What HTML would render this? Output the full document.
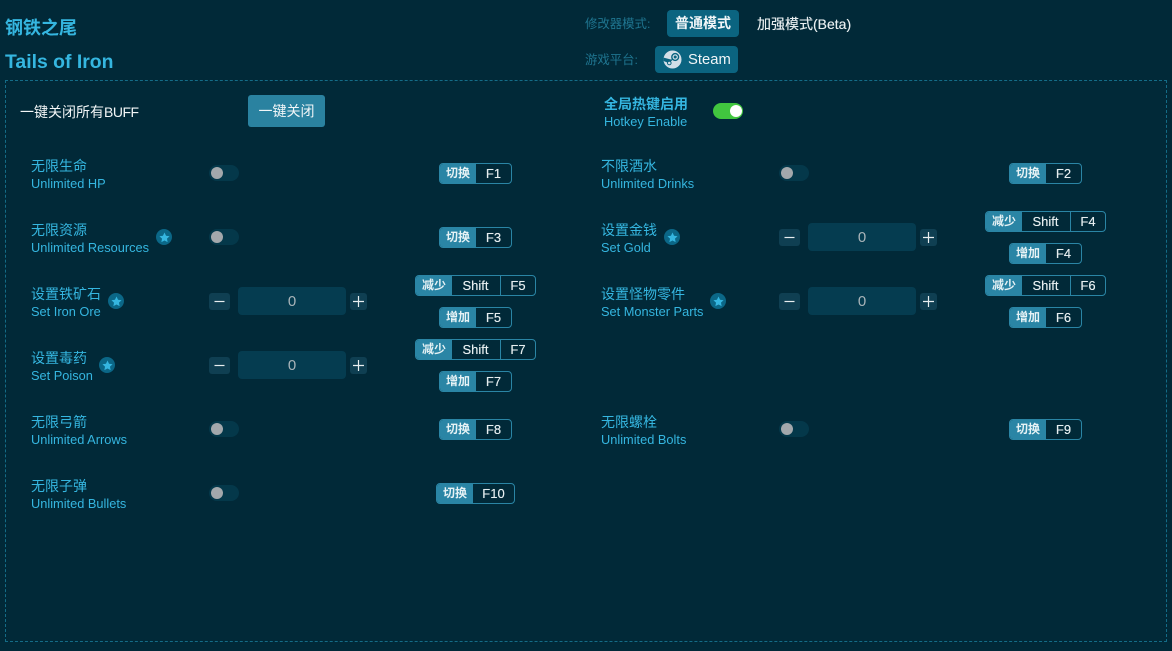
<!DOCTYPE html>
<html lang="zh">
<head>
<meta charset="utf-8">
<style>
html,body{margin:0;padding:0;width:1172px;height:651px;overflow:hidden;background:#012938;}
body{position:relative;font-family:"Liberation Sans","Noto Sans CJK SC",sans-serif;color:#35b6e0;}
.a,.a *{box-sizing:border-box;}
.a{position:absolute;white-space:nowrap;}
.cn{font-size:14px;line-height:18px;color:#35b6e0;}
.en{font-size:12.8px;line-height:16px;color:#35b6e0;}
.t{width:30px;height:16px;border-radius:8px;background:#04384a;}
.t i{position:absolute;left:2px;top:2px;width:12px;height:12px;border-radius:50%;background:#a3a8ac;}
.s{width:16px;height:16px;border-radius:50%;background:#0b6787;}
.s svg{position:absolute;left:2.5px;top:2.5px;width:11px;height:11px;}
.b{width:21px;height:17px;border-radius:3px;background:#0f3f52;}
.b.p{width:17px;}
.b svg{position:absolute;left:0;top:0;width:100%;height:100%;}
.n{width:108px;height:28px;border-radius:4px;background:#053c50;color:#a9b4b9;font-size:15px;line-height:30px;text-align:center;}
.k{display:flex;height:21px;border:1px solid #2a85a5;border-radius:4px;font-size:13px;line-height:19px;color:#e6eef0;overflow:hidden;text-shadow:0 0 .4px #e6eef0;}
.k b{display:block;background:#2a85a5;width:37px;text-align:center;font-size:12px;font-weight:700;color:#e6f2f5;flex:none;margin-left:-1px;padding-left:1px;text-shadow:none;}
.k span{display:block;text-align:center;flex:none;padding-right:1px;}
.k span+span{border-left:1px solid #2a85a5;}
</style>
</head>
<body>
<div class="a" style="left:5px;top:16px;font-size:18px;line-height:24px;font-weight:700;color:#35b6e0;">钢铁之尾</div>
<div class="a" style="left:5px;top:50px;font-size:19.4px;line-height:24px;font-weight:700;color:#35b6e0;">Tails of Iron</div>

<div class="a" style="left:585px;top:15px;font-size:12.4px;line-height:18px;color:#1f7590;">修改器模式:</div>
<div class="a" style="left:667px;top:10px;width:72px;height:27px;border-radius:4px;background:#0b6480;color:#f1f6f8;font-size:14px;line-height:27px;text-align:center;font-weight:700;">普通模式</div>
<div class="a" style="left:757px;top:15px;font-size:14px;line-height:18px;color:#e8eef0;text-shadow:0 0 .4px #e8eef0;">加强模式(Beta)</div>
<div class="a" style="left:585px;top:51px;font-size:12.4px;line-height:18px;color:#1f7590;">游戏平台:</div>
<div class="a" style="left:655px;top:46px;width:83px;height:27px;border-radius:4px;background:#0b6480;"></div>
<svg class="a" style="left:663px;top:50px;" width="19" height="19" viewBox="0 0 19 19">
<circle cx="9.5" cy="9.5" r="9" fill="#d3dfe8"/>
<path d="M0.6 11 L6 13.2 L10 9.5 L13 9.5 L13 5 L10 5 L8.4 9.6 L0.6 7.6 Z" fill="#0b6480"/>
<circle cx="12.2" cy="7" r="3.4" fill="#d3dfe8" stroke="#0b6480" stroke-width="1.4"/>
<circle cx="12.2" cy="7" r="1.5" fill="#0b6480"/>
<circle cx="6.3" cy="13" r="1.8" fill="#d3dfe8" stroke="#0b6480" stroke-width="1"/>
</svg>
<div class="a" style="left:688px;top:50px;font-size:14.8px;line-height:20px;color:#f1f6f8;">Steam</div>

<div class="a" style="left:5px;top:80px;width:1162px;height:562px;border:1px dashed #146c87;"></div>

<div class="a" style="left:20px;top:103px;font-size:14px;line-height:18px;color:#f3f6f7;">一键关闭所有<span style="letter-spacing:-.5px;">BUFF</span></div>
<div class="a" style="left:248px;top:95px;width:77px;height:32px;border-radius:3px;background:#2a82a0;color:#f1f6f8;font-size:14px;line-height:32px;text-align:center;">一键关闭</div>
<div class="a cn" style="left:604px;top:95px;font-weight:700;">全局热键启用</div>
<div class="a en" style="left:604px;top:114px;">Hotkey Enable</div>
<div class="a t" style="left:713px;top:103px;background:#41c63f;"><i style="left:17px;top:2px;background:#fff;"></i></div>

<!-- Left column -->
<div class="a cn" style="left:31px;top:157px;">无限生命</div>
<div class="a en" style="left:31px;top:176px;">Unlimited HP</div>
<div class="a t" style="left:209px;top:165px;"><i></i></div>
<div class="a k" style="left:439px;top:163px;width:73px;"><b>切换</b><span style="width:36px;">F1</span></div>

<div class="a cn" style="left:31px;top:221px;">无限资源</div>
<div class="a en" style="left:31px;top:240px;">Unlimited Resources</div>
<div class="a s" style="left:156px;top:229px;"><svg viewBox="0 0 20 20"><path d="M10 1l2.8 5.9 6.4.8-4.7 4.4 1.2 6.4L10 15.4l-5.7 3.1 1.2-6.4L.8 7.7l6.4-.8z" fill="#35b6e0"/></svg></div>
<div class="a t" style="left:209px;top:229px;"><i></i></div>
<div class="a k" style="left:439px;top:227px;width:73px;"><b>切换</b><span style="width:36px;">F3</span></div>

<div class="a cn" style="left:31px;top:285px;">设置铁矿石</div>
<div class="a en" style="left:31px;top:304px;">Set Iron Ore</div>
<div class="a s" style="left:108px;top:293px;"><svg viewBox="0 0 20 20"><path d="M10 1l2.8 5.9 6.4.8-4.7 4.4 1.2 6.4L10 15.4l-5.7 3.1 1.2-6.4L.8 7.7l6.4-.8z" fill="#35b6e0"/></svg></div>
<div class="a b" style="left:209px;top:293px;"><svg viewBox="0 0 21 17"><path d="M5.5 8.5h10" stroke="#e8eef0" stroke-width="1.2"/></svg></div>
<div class="a n" style="left:238px;top:287px;">0</div>
<div class="a b p" style="left:350px;top:293px;"><svg viewBox="0 0 17 17"><path d="M3 8.5h11M8.5 3v11" stroke="#e8eef0" stroke-width="1.2"/></svg></div>
<div class="a k" style="left:415px;top:275px;width:121px;"><b>减少</b><span style="width:48px;">Shift</span><span style="width:36px;">F5</span></div>
<div class="a k" style="left:439px;top:307px;width:73px;"><b>增加</b><span style="width:36px;">F5</span></div>

<div class="a cn" style="left:31px;top:349px;">设置毒药</div>
<div class="a en" style="left:31px;top:368px;">Set Poison</div>
<div class="a s" style="left:99px;top:357px;"><svg viewBox="0 0 20 20"><path d="M10 1l2.8 5.9 6.4.8-4.7 4.4 1.2 6.4L10 15.4l-5.7 3.1 1.2-6.4L.8 7.7l6.4-.8z" fill="#35b6e0"/></svg></div>
<div class="a b" style="left:209px;top:357px;"><svg viewBox="0 0 21 17"><path d="M5.5 8.5h10" stroke="#e8eef0" stroke-width="1.2"/></svg></div>
<div class="a n" style="left:238px;top:351px;">0</div>
<div class="a b p" style="left:350px;top:357px;"><svg viewBox="0 0 17 17"><path d="M3 8.5h11M8.5 3v11" stroke="#e8eef0" stroke-width="1.2"/></svg></div>
<div class="a k" style="left:415px;top:339px;width:121px;"><b>减少</b><span style="width:48px;">Shift</span><span style="width:36px;">F7</span></div>
<div class="a k" style="left:439px;top:371px;width:73px;"><b>增加</b><span style="width:36px;">F7</span></div>

<div class="a cn" style="left:31px;top:413px;">无限弓箭</div>
<div class="a en" style="left:31px;top:432px;">Unlimited Arrows</div>
<div class="a t" style="left:209px;top:421px;"><i></i></div>
<div class="a k" style="left:439px;top:419px;width:73px;"><b>切换</b><span style="width:36px;">F8</span></div>

<div class="a cn" style="left:31px;top:477px;">无限子弹</div>
<div class="a en" style="left:31px;top:496px;">Unlimited Bullets</div>
<div class="a t" style="left:209px;top:485px;"><i></i></div>
<div class="a k" style="left:436px;top:483px;width:79px;"><b>切换</b><span style="width:42px;">F10</span></div>

<!-- Right column -->
<div class="a cn" style="left:601px;top:157px;">不限酒水</div>
<div class="a en" style="left:601px;top:176px;">Unlimited Drinks</div>
<div class="a t" style="left:779px;top:165px;"><i></i></div>
<div class="a k" style="left:1009px;top:163px;width:73px;"><b>切换</b><span style="width:36px;">F2</span></div>

<div class="a cn" style="left:601px;top:221px;">设置金钱</div>
<div class="a en" style="left:601px;top:240px;">Set Gold</div>
<div class="a s" style="left:664px;top:229px;"><svg viewBox="0 0 20 20"><path d="M10 1l2.8 5.9 6.4.8-4.7 4.4 1.2 6.4L10 15.4l-5.7 3.1 1.2-6.4L.8 7.7l6.4-.8z" fill="#35b6e0"/></svg></div>
<div class="a b" style="left:779px;top:229px;"><svg viewBox="0 0 21 17"><path d="M5.5 8.5h10" stroke="#e8eef0" stroke-width="1.2"/></svg></div>
<div class="a n" style="left:808px;top:223px;">0</div>
<div class="a b p" style="left:920px;top:229px;"><svg viewBox="0 0 17 17"><path d="M3 8.5h11M8.5 3v11" stroke="#e8eef0" stroke-width="1.2"/></svg></div>
<div class="a k" style="left:985px;top:211px;width:121px;"><b>减少</b><span style="width:48px;">Shift</span><span style="width:36px;">F4</span></div>
<div class="a k" style="left:1009px;top:243px;width:73px;"><b>增加</b><span style="width:36px;">F4</span></div>

<div class="a cn" style="left:601px;top:285px;">设置怪物零件</div>
<div class="a en" style="left:601px;top:304px;">Set Monster Parts</div>
<div class="a s" style="left:710px;top:293px;"><svg viewBox="0 0 20 20"><path d="M10 1l2.8 5.9 6.4.8-4.7 4.4 1.2 6.4L10 15.4l-5.7 3.1 1.2-6.4L.8 7.7l6.4-.8z" fill="#35b6e0"/></svg></div>
<div class="a b" style="left:779px;top:293px;"><svg viewBox="0 0 21 17"><path d="M5.5 8.5h10" stroke="#e8eef0" stroke-width="1.2"/></svg></div>
<div class="a n" style="left:808px;top:287px;">0</div>
<div class="a b p" style="left:920px;top:293px;"><svg viewBox="0 0 17 17"><path d="M3 8.5h11M8.5 3v11" stroke="#e8eef0" stroke-width="1.2"/></svg></div>
<div class="a k" style="left:985px;top:275px;width:121px;"><b>减少</b><span style="width:48px;">Shift</span><span style="width:36px;">F6</span></div>
<div class="a k" style="left:1009px;top:307px;width:73px;"><b>增加</b><span style="width:36px;">F6</span></div>

<div class="a cn" style="left:601px;top:413px;">无限螺栓</div>
<div class="a en" style="left:601px;top:432px;">Unlimited Bolts</div>
<div class="a t" style="left:779px;top:421px;"><i></i></div>
<div class="a k" style="left:1009px;top:419px;width:73px;"><b>切换</b><span style="width:36px;">F9</span></div>
</body>
</html>
